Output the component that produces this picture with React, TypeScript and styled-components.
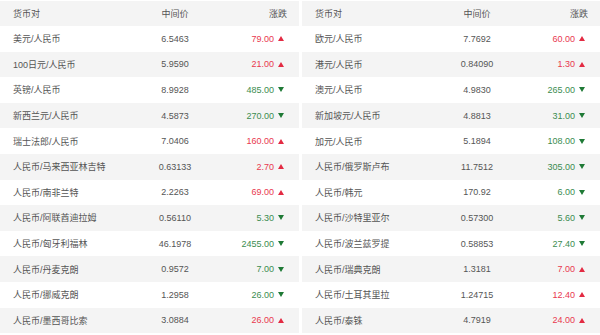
import styled, { createGlobalStyle } from 'styled-components'

const GlobalStyle = createGlobalStyle`
    html, body {
        margin: 0;
        padding: 0;
        background: #fff;
    }
    body {
        font-family: "Liberation Sans", "Noto Sans CJK SC", sans-serif;
        font-size: 9px;
        color: #555;
    }
`

type Rate = { pair: string; mid: string; change: string; up: boolean }

const left: Rate[] = [
    { pair: '美元/人民币', mid: '6.5463', change: '79.00', up: true },
    { pair: '100日元/人民币', mid: '5.9590', change: '21.00', up: true },
    { pair: '英镑/人民币', mid: '8.9928', change: '485.00', up: false },
    { pair: '新西兰元/人民币', mid: '4.5873', change: '270.00', up: false },
    { pair: '瑞士法郎/人民币', mid: '7.0406', change: '160.00', up: true },
    { pair: '人民币/马来西亚林吉特', mid: '0.63133', change: '2.70', up: true },
    { pair: '人民币/南非兰特', mid: '2.2263', change: '69.00', up: true },
    { pair: '人民币/阿联酋迪拉姆', mid: '0.56110', change: '5.30', up: false },
    { pair: '人民币/匈牙利福林', mid: '46.1978', change: '2455.00', up: false },
    { pair: '人民币/丹麦克朗', mid: '0.9572', change: '7.00', up: false },
    { pair: '人民币/挪威克朗', mid: '1.2958', change: '26.00', up: false },
    { pair: '人民币/墨西哥比索', mid: '3.0884', change: '26.00', up: true },
]

const right: Rate[] = [
    { pair: '欧元/人民币', mid: '7.7692', change: '60.00', up: true },
    { pair: '港元/人民币', mid: '0.84090', change: '1.30', up: true },
    { pair: '澳元/人民币', mid: '4.9830', change: '265.00', up: false },
    { pair: '新加坡元/人民币', mid: '4.8813', change: '31.00', up: false },
    { pair: '加元/人民币', mid: '5.1894', change: '108.00', up: false },
    { pair: '人民币/俄罗斯卢布', mid: '11.7512', change: '305.00', up: false },
    { pair: '人民币/韩元', mid: '170.92', change: '6.00', up: false },
    { pair: '人民币/沙特里亚尔', mid: '0.57300', change: '5.60', up: false },
    { pair: '人民币/波兰兹罗提', mid: '0.58853', change: '27.40', up: false },
    { pair: '人民币/瑞典克朗', mid: '1.3181', change: '7.00', up: true },
    { pair: '人民币/土耳其里拉', mid: '1.24715', change: '12.40', up: true },
    { pair: '人民币/泰铢', mid: '4.7919', change: '24.00', up: true },
]

const Wrapper = styled.div`
    display: flex;
    gap: 3px;
    width: 600px;
    padding-top: 1px;
`

const Table = styled.div<{ $width: number }>`
    width: ${p => p.$width}px;
    display: flex;
    flex-direction: column;
`

const Row = styled.div<{ $gray?: boolean }>`
    display: flex;
    align-items: center;
    height: 25.6px;
    background-color: ${p => (p.$gray ? '#f4f4f4' : '#fff')};
`

const Header = styled(Row)`
    height: 25px;
    background-color: #f4f4f4;
`

const Pair = styled.div`
    width: 120px;
    padding-left: 13px;
    box-sizing: border-box;
    white-space: nowrap;
`

const Mid = styled.div`
    width: 110px;
    text-align: center;
`

const Change = styled.div<{ $pad: number }>`
    flex: 1;
    display: flex;
    justify-content: flex-end;
    align-items: center;
    padding-right: ${p => p.$pad}px;
`

const Value = styled.span<{ $up: boolean }>`
    color: ${p => (p.$up ? '#e9384f' : '#3b8c50')};
`

const Arrow = styled.span<{ $up: boolean }>`
    display: inline-block;
    width: 0;
    height: 0;
    margin-left: 4px;
    border-left: 3px solid transparent;
    border-right: 3px solid transparent;
    ${p => (p.$up
        ? 'border-bottom: 5px solid #e32b43;'
        : 'border-top: 5px solid #1f7a36;')}
`

const RateTable = ({ rows, width }: { rows: Rate[]; width: number }) => (
    <Table $width={width}>
        <Header>
            <Pair>货币对</Pair>
            <Mid>中间价</Mid>
            <Change $pad={12}>涨跌</Change>
        </Header>
        {rows.map((r, i) => (
            <Row key={r.pair} $gray={i % 2 === 1}>
                <Pair>{r.pair}</Pair>
                <Mid>{r.mid}</Mid>
                <Change $pad={15}>
                    <Value $up={r.up}>{r.change}</Value>
                    <Arrow $up={r.up} />
                </Change>
            </Row>
        ))}
    </Table>
)

export default function App() {
    return (
        <>
            <GlobalStyle />
            <Wrapper>
                <RateTable rows={left} width={299} />
                <RateTable rows={right} width={298} />
            </Wrapper>
        </>
    )
}
